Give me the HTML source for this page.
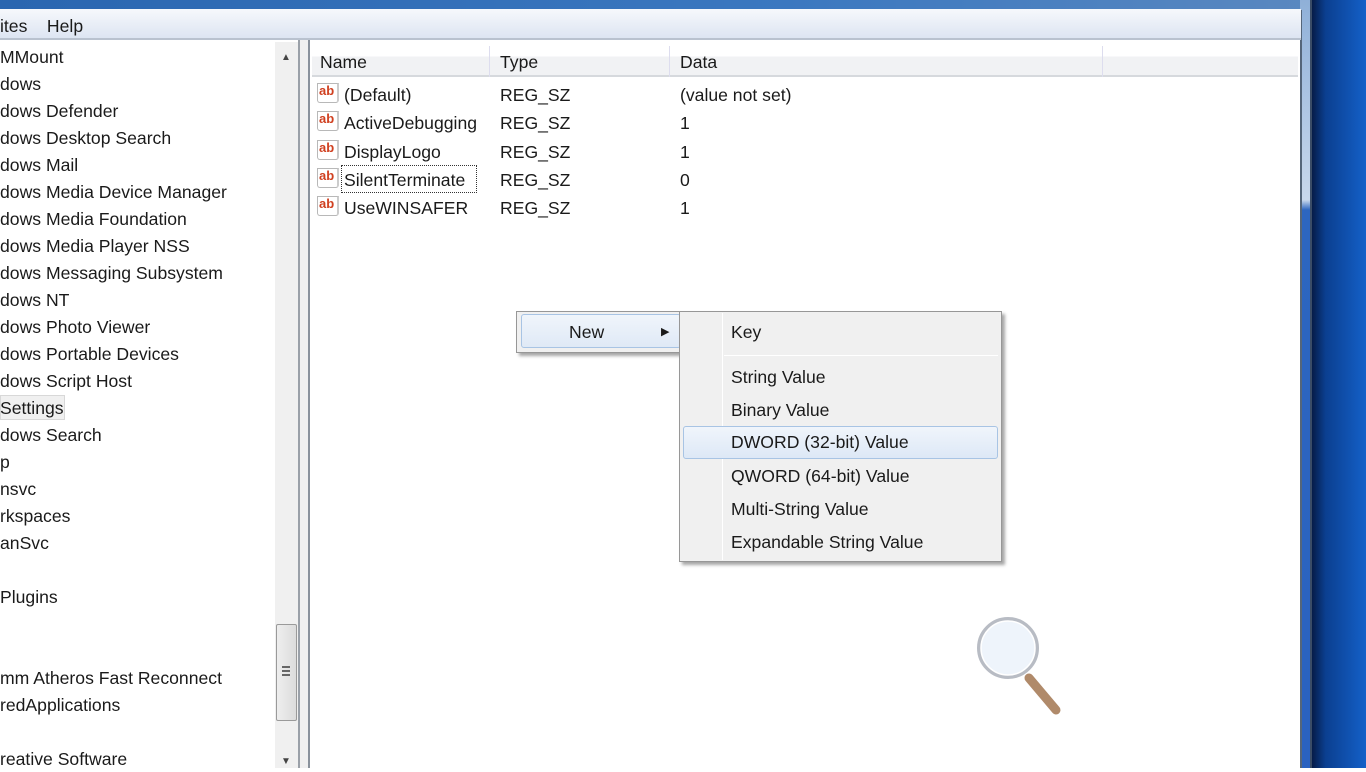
<!DOCTYPE html>
<html><head><style>
*{margin:0;padding:0;box-sizing:border-box}
html{background:#fff}
body{width:1366px;height:768px;overflow:hidden;position:relative;font-family:"Liberation Sans",sans-serif;background:#fff;color:#1a1a1a}
.abs{position:absolute}
.t{position:absolute;font-size:17.6px;white-space:nowrap;line-height:20px}
.ab{position:absolute;width:22px;height:20px;border:1px solid #b8b8b8;border-right:2px solid #ccc;background:#fff;color:#d04020;font-weight:bold;font-size:13px;line-height:14px;text-align:left;padding-left:1px;border-radius:0 0 3px 3px}
</style></head><body>
<!-- desktop -->
<div class="abs" style="left:1312px;top:0;width:54px;height:768px;background:linear-gradient(90deg,#061c48,#0b3f90 25%,#1460c8)"></div>
<!-- title bar -->
<div class="abs" style="left:0;top:0;width:1312px;height:9px;background:linear-gradient(90deg,#2a66b0,#3b78c0 60%,#5a88c0)"></div>
<!-- window frame right -->
<div class="abs" style="left:1300px;top:0;width:12px;height:768px;background:linear-gradient(180deg,#8fb0d8 0,#c8d8ec 200px,#2d66c0 210px,#2a62c0)"></div>
<div class="abs" style="left:1300px;top:10px;width:2px;height:758px;background:#55667a"></div>
<div class="abs" style="left:1310px;top:0;width:2px;height:768px;background:#3a4c66"></div>
<!-- menu bar -->
<div class="abs" style="left:0;top:9px;width:1301px;height:31px;background:linear-gradient(#f6f8fc,#dde5f2);border-bottom:2px solid #b9c2cf"></div>
<div class="t" style="left:0;top:16px">ites&nbsp;&nbsp;&nbsp;&nbsp;Help</div>
<!-- left pane -->
<div class="abs" style="left:0;top:40px;width:300px;height:728px;background:#fff;border-right:2px solid #9aa0a8"></div>
<div class="abs" style="left:275px;top:42px;width:23px;height:726px;background:#f0f0f0"></div>
<div class="abs" style="left:276px;top:624px;width:21px;height:97px;background:linear-gradient(90deg,#eee,#dcdcdc);border:1px solid #9a9a9a;border-radius:2px"></div>
<div class="abs" style="left:282px;top:666px;width:8px;height:10px;border-top:2px solid #666;border-bottom:2px solid #666"></div>
<div class="abs" style="left:282px;top:670px;width:8px;height:2px;background:#666"></div>
<div class="t" style="left:281px;top:48px;font-size:10px;color:#444">▲</div>
<div class="t" style="left:281px;top:752px;font-size:10px;color:#444">▼</div>
<div class="abs" style="left:300px;top:40px;width:10px;height:728px;background:#f0f0f0;border-right:2px solid #8a929c"></div>
<div class="t" style="left:0;top:47px">MMount</div>
<div class="t" style="left:0;top:74px">dows</div>
<div class="t" style="left:0;top:101px">dows Defender</div>
<div class="t" style="left:0;top:128px">dows Desktop Search</div>
<div class="t" style="left:0;top:155px">dows Mail</div>
<div class="t" style="left:0;top:182px">dows Media Device Manager</div>
<div class="t" style="left:0;top:209px">dows Media Foundation</div>
<div class="t" style="left:0;top:236px">dows Media Player NSS</div>
<div class="t" style="left:0;top:263px">dows Messaging Subsystem</div>
<div class="t" style="left:0;top:290px">dows NT</div>
<div class="t" style="left:0;top:317px">dows Photo Viewer</div>
<div class="t" style="left:0;top:344px">dows Portable Devices</div>
<div class="t" style="left:0;top:371px">dows Script Host</div>
<div class="abs" style="left:0;top:395px;width:65px;height:25px;background:#f0f0f0;border:1px solid #d8d8d8"></div>
<div class="t" style="left:0;top:398px">Settings</div>
<div class="t" style="left:0;top:425px">dows Search</div>
<div class="t" style="left:0;top:452px">p</div>
<div class="t" style="left:0;top:479px">nsvc</div>
<div class="t" style="left:0;top:506px">rkspaces</div>
<div class="t" style="left:0;top:533px">anSvc</div>
<div class="t" style="left:0;top:587px">Plugins</div>
<div class="t" style="left:0;top:668px">mm Atheros Fast Reconnect</div>
<div class="t" style="left:0;top:695px">redApplications</div>
<div class="t" style="left:0;top:749px">reative Software</div>
<!-- right pane -->
<div class="abs" style="left:312px;top:40px;width:988px;height:728px;background:#fff"></div>
<div class="abs" style="left:312px;top:46px;width:986px;height:31px;background:linear-gradient(#fff 0,#fff 10px,#f1f2f4 11px,#f1f2f4);border-bottom:2px solid #d6d9dd"></div>
<div class="abs" style="left:489px;top:46px;width:1px;height:31px;background:#dde"></div>
<div class="abs" style="left:669px;top:46px;width:1px;height:31px;background:#dde"></div>
<div class="abs" style="left:1102px;top:46px;width:1px;height:31px;background:#dde"></div>
<div class="t" style="left:320px;top:52px">Name</div>
<div class="t" style="left:500px;top:52px">Type</div>
<div class="t" style="left:680px;top:52px">Data</div>
<div class="ab" style="left:317px;top:83px">ab</div><div class="t" style="left:344px;top:85px">(Default)</div><div class="t" style="left:500px;top:85px">REG_SZ</div><div class="t" style="left:680px;top:85px">(value not set)</div>
<div class="ab" style="left:317px;top:111px">ab</div><div class="t" style="left:344px;top:113px">ActiveDebugging</div><div class="t" style="left:500px;top:113px">REG_SZ</div><div class="t" style="left:680px;top:113px">1</div>
<div class="ab" style="left:317px;top:140px">ab</div><div class="t" style="left:344px;top:142px">DisplayLogo</div><div class="t" style="left:500px;top:142px">REG_SZ</div><div class="t" style="left:680px;top:142px">1</div>
<div class="ab" style="left:317px;top:168px">ab</div><div class="abs" style="left:341px;top:165px;width:136px;height:28px;border:1px dotted #333"></div><div class="t" style="left:344px;top:170px">SilentTerminate</div><div class="t" style="left:500px;top:170px">REG_SZ</div><div class="t" style="left:680px;top:170px">0</div>
<div class="ab" style="left:317px;top:196px">ab</div><div class="t" style="left:344px;top:198px">UseWINSAFER</div><div class="t" style="left:500px;top:198px">REG_SZ</div><div class="t" style="left:680px;top:198px">1</div>
<!-- context menu -->
<div class="abs" style="left:516px;top:311px;width:166px;height:42px;background:#f0f0f0;border:1px solid #979797;box-shadow:3px 3px 3px rgba(0,0,0,.35)"></div>
<div class="abs" style="left:521px;top:314px;width:160px;height:34px;background:linear-gradient(#f0f5fb,#dfe9f6);border:1px solid #a8c4e4;border-radius:3px"></div>
<div class="t" style="left:569px;top:322px">New</div>
<div class="t" style="left:661px;top:322px;font-size:11px">▶</div>
<div class="abs" style="left:679px;top:311px;width:323px;height:251px;background:#f0f0f0;border:1px solid #979797;box-shadow:3px 3px 3px rgba(0,0,0,.35)"></div>
<div class="abs" style="left:722px;top:313px;width:1px;height:247px;background:#e0e0e0;border-right:1px solid #fff"></div>
<div class="abs" style="left:724px;top:355px;width:274px;height:1px;background:#d8d8d8;border-bottom:1px solid #fff"></div>
<div class="abs" style="left:683px;top:426px;width:315px;height:33px;background:linear-gradient(#f0f5fb,#dde8f6);border:1px solid #a8c4e4;border-radius:3px"></div>
<div class="t" style="left:731px;top:322px">Key</div>
<div class="t" style="left:731px;top:367px">String Value</div>
<div class="t" style="left:731px;top:400px">Binary Value</div>
<div class="t" style="left:731px;top:432px">DWORD (32-bit) Value</div>
<div class="t" style="left:731px;top:466px">QWORD (64-bit) Value</div>
<div class="t" style="left:731px;top:499px">Multi-String Value</div>
<div class="t" style="left:731px;top:532px">Expandable String Value</div>
<!-- magnifier -->
<svg class="abs" style="left:960px;top:600px" width="120" height="130">
<line x1="69" y1="78" x2="96" y2="110" stroke="#b08a6a" stroke-width="9" stroke-linecap="round"/>
<circle cx="48" cy="48" r="29" fill="#eef4fb" stroke="#b8bcc4" stroke-width="4"/>
<circle cx="48" cy="48" r="27" fill="none" stroke="#fff" stroke-width="1.5"/>
</svg>
</body></html>
